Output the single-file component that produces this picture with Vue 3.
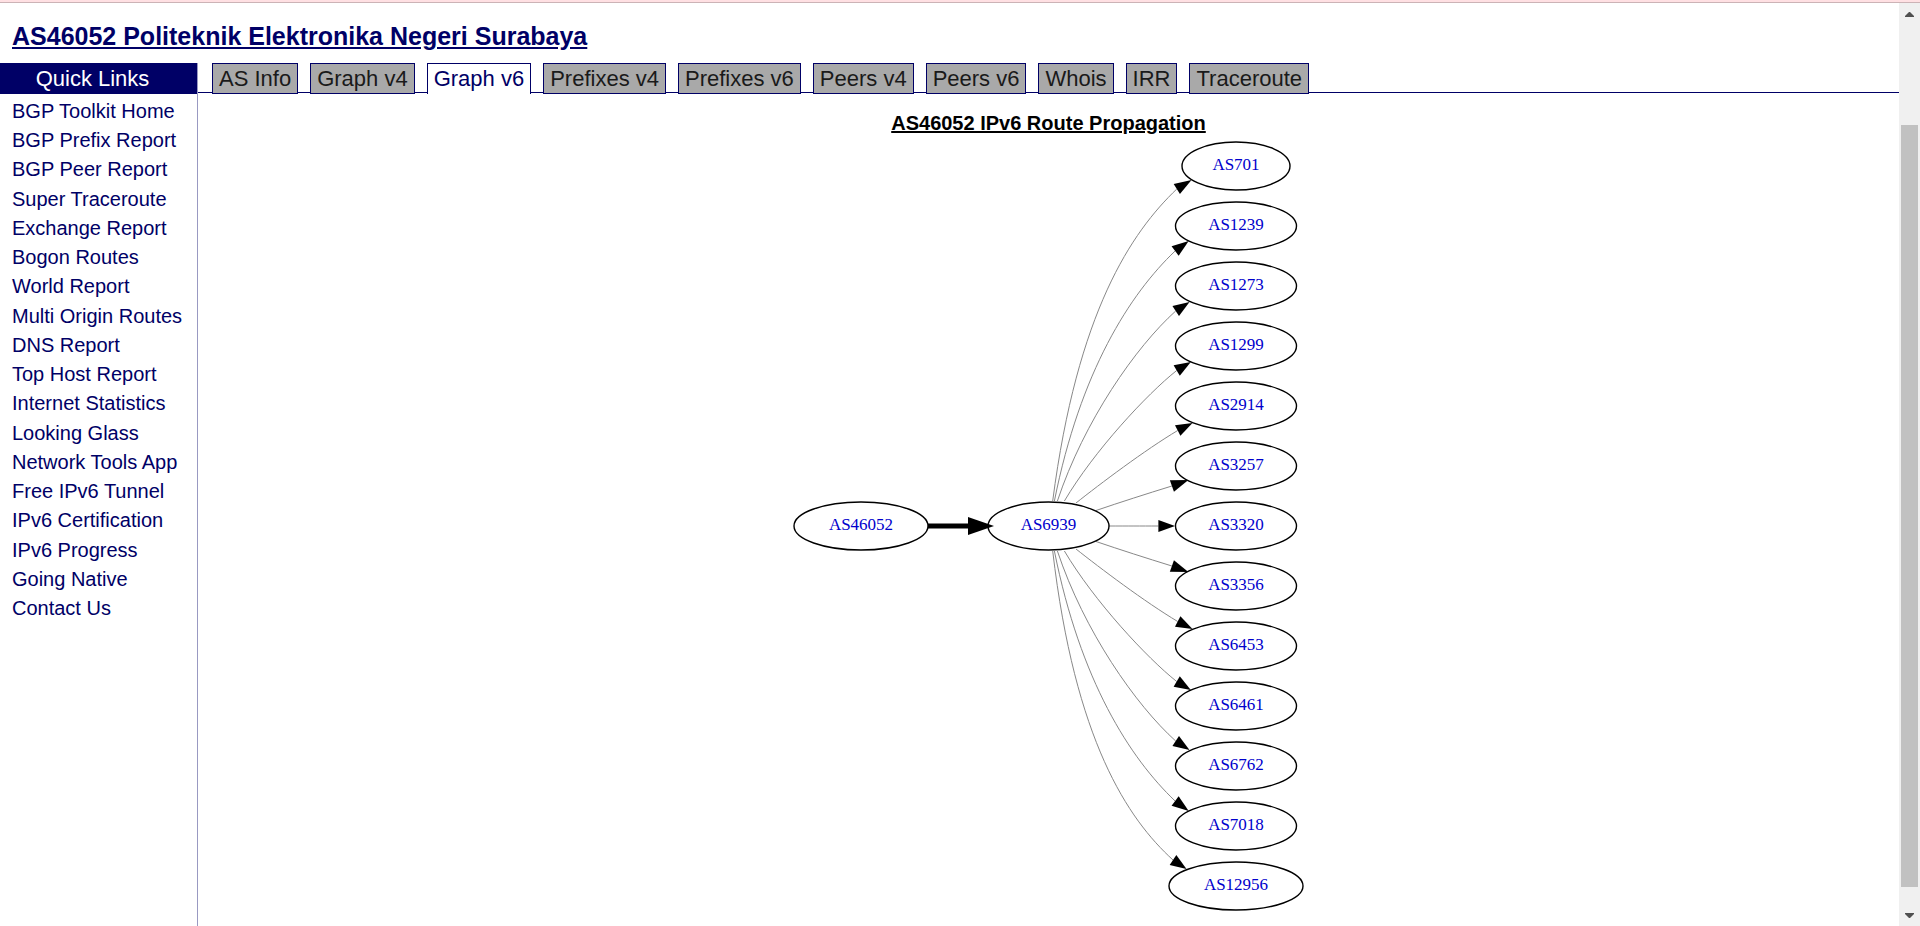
<script setup>
const tabs = [
  'AS Info', 'Graph v4', 'Graph v6', 'Prefixes v4', 'Prefixes v6',
  'Peers v4', 'Peers v6', 'Whois', 'IRR', 'Traceroute',
]
const activeTab = 'Graph v6'

const links = [
  'BGP Toolkit Home', 'BGP Prefix Report', 'BGP Peer Report', 'Super Traceroute',
  'Exchange Report', 'Bogon Routes', 'World Report', 'Multi Origin Routes',
  'DNS Report', 'Top Host Report', 'Internet Statistics', 'Looking Glass',
  'Network Tools App', 'Free IPv6 Tunnel', 'IPv6 Certification', 'IPv6 Progress',
  'Going Native', 'Contact Us',
]

// Graph coordinates: the middle row, holding the origin network, is y = 0.
const nodes = [
  { name: 'AS46052', x: 73, y: 0, rx: 67 },
  { name: 'AS6939', x: 260.5, y: 0, rx: 60.5 },
  { name: 'AS701', x: 448, y: -360, rx: 54 },
  { name: 'AS1239', x: 448, y: -300, rx: 60.5 },
  { name: 'AS1273', x: 448, y: -240, rx: 60.5 },
  { name: 'AS1299', x: 448, y: -180, rx: 60.5 },
  { name: 'AS2914', x: 448, y: -120, rx: 60.5 },
  { name: 'AS3257', x: 448, y: -60, rx: 60.5 },
  { name: 'AS3320', x: 448, y: 0, rx: 60.5 },
  { name: 'AS3356', x: 448, y: 60, rx: 60.5 },
  { name: 'AS6453', x: 448, y: 120, rx: 60.5 },
  { name: 'AS6461', x: 448, y: 180, rx: 60.5 },
  { name: 'AS6762', x: 448, y: 240, rx: 60.5 },
  { name: 'AS7018', x: 448, y: 300, rx: 60.5 },
  { name: 'AS12956', x: 448, y: 360, rx: 67 },
]

// Each edge: start, two control points, arrow base, arrow tip (y above the middle row).
const curves = {
  steep: [[264.7, 25], [289.4, 215], [343.8, 294], [388.8, 337], [403.5, 346]],
  wide: [[264.7, 25], [287, 215], [340, 293], [385, 334], [398.5, 343]],
  second: [[266.4, 25], [292.4, 155], [342, 232], [387.1, 275], [400.7, 285]],
  third: [[269.4, 25], [296, 105], [347.7, 179], [387.7, 215], [401.5, 224]],
  fourth: [[276.4, 25], [306, 75], [359, 132], [388.7, 155.5], [402.8, 164]],
  fifth: [[288, 23], [312, 42], [357, 76], [389.7, 95.5], [404.5, 103]],
  sixth: [[308, 15.5], [333, 24], [358, 32], [383.9, 40], [400.4, 46]],
  level: [[321, 0], [340, 0], [352, 0], [370.4, 0], [387, 0]],
}

function edge(name, side) {
  const [s, a, b, base, tip] = curves[name].map(([x, y]) => [x, y * side])
  const dx = tip[0] - base[0]
  const dy = tip[1] - base[1]
  const len = Math.hypot(dx, dy)
  const nx = (-dy / len) * 6
  const ny = (dx / len) * 6
  return {
    line: `M${s} C${a} ${b} ${base}`,
    arrow: `${base[0] + nx},${base[1] + ny} ${tip} ${base[0] - nx},${base[1] - ny}`,
  }
}

const edges = [
  edge('steep', -1), edge('second', -1), edge('third', -1), edge('fourth', -1),
  edge('fifth', -1), edge('sixth', -1), edge('level', 1), edge('sixth', 1),
  edge('fifth', 1), edge('fourth', 1), edge('third', 1), edge('second', 1),
  edge('wide', 1),
]
</script>

<template>
  <div class="page">
    <div class="notice"></div>
    <div class="view">
      <div class="content">
        <h1><a href="#">AS46052 Politeknik Elektronika Negeri Surabaya</a></h1>
        <div class="columns">
          <aside class="sidebar">
            <div class="sidebar-title">Quick Links</div>
            <ul>
              <li v-for="link in links" :key="link"><a href="#">{{ link }}</a></li>
            </ul>
          </aside>
          <main>
            <nav class="tabs">
              <a
                v-for="tab in tabs"
                :key="tab"
                href="#"
                class="tab"
                :class="{ active: tab === activeTab }"
              >{{ tab }}</a>
            </nav>
            <h2>AS46052 IPv6 Route Propagation</h2>
            <svg class="graph" viewBox="0 -390 521 780" width="521" height="780" role="img" aria-label="Route graph">
              <g v-for="(e, i) in edges" :key="i">
                <path class="line" :d="e.line" />
                <polygon :points="e.arrow" />
              </g>
              <a v-for="n in nodes" :key="n.name" href="#">
                <ellipse :cx="n.x" :cy="n.y" :rx="n.rx" ry="24" />
                <text :x="n.x" :y="n.y + 4">{{ n.name }}</text>
              </a>
              <path class="trunk" d="M140 0H182" />
              <polygon points="180,-9 206,0 180,9" />
            </svg>
          </main>
        </div>
      </div>
      <div class="scrollbar">
        <svg width="9" height="5" viewBox="0 0 9 5"><path d="M0 5V4L4 0H5L9 4V5Z" /></svg>
        <div class="thumb"></div>
        <svg width="9" height="5" viewBox="0 0 9 5"><path d="M0 0V1L4 5H5L9 1V0Z" /></svg>
      </div>
    </div>
  </div>
</template>

<style>
body {
  margin: 0;
  background: #fff;
}
</style>

<style scoped>
.page {
  display: flex;
  flex-direction: column;
  min-height: 100vh;
  font-family: "Liberation Sans", Arial, sans-serif;
  color: #000;
}
.notice {
  height: 2px;
  background: #ffe0e3;
  border-bottom: 1px solid #ccb3b6;
}
.view {
  flex: 1;
  display: flex;
}
.content {
  flex: 1;
  min-width: 0;
  display: flex;
  flex-direction: column;
}
a {
  color: #000066;
  text-decoration: none;
}
h1 {
  margin: 0;
  padding: 17px 12px 11px;
  font-size: 25px;
  line-height: 32px;
}
h1 a {
  text-decoration: underline;
}
.columns {
  flex: 1;
  display: flex;
}
.sidebar {
  width: 197px;
  flex: none;
  border-right: 1px solid #9999c2;
}
.sidebar-title {
  padding-right: 12px;
  background: #000066;
  color: #fff;
  font-size: 22px;
  line-height: 31px;
  text-align: center;
}
ul {
  display: grid;
  align-content: space-between;
  min-height: 526px;
  margin: 0;
  padding: 3px 0 0 12px;
  list-style: none;
  font-size: 20px;
  line-height: 29px;
}
main {
  flex: 1;
  min-width: 0;
}
.tabs {
  display: flex;
  gap: 12px;
  height: 29px;
  padding-left: 14px;
  border-bottom: 1px solid #000066;
}
.tab {
  height: 29px;
  padding: 0 6px;
  border: 1px solid #000066;
  background: #a9a9a9;
  color: #1a1a1a;
  font-size: 22px;
  line-height: 29px;
  white-space: nowrap;
}
.tab.active {
  height: 30px;
  border-bottom: 0;
  background: #fff;
  color: #000066;
}
h2 {
  margin: 0;
  padding-top: 17px;
  font-size: 20px;
  line-height: 26px;
  text-align: center;
  text-decoration: underline;
}
.graph {
  display: block;
  margin: 0 auto;
}
.graph ellipse {
  fill: none;
  stroke: #000;
  stroke-width: 1.4;
}
.graph text {
  fill: #0000cc;
  font-family: "Liberation Serif", "Times New Roman", serif;
  font-size: 17px;
  text-anchor: middle;
}
.line {
  fill: none;
  stroke: #888;
  stroke-width: 1;
}
.trunk {
  stroke: #000;
  stroke-width: 5;
}
.scrollbar {
  width: 21px;
  display: flex;
  flex-direction: column;
  align-items: center;
  justify-content: space-between;
  box-sizing: border-box;
  padding: 9px 2px 8px;
  background: #f0f0f0;
}
.scrollbar svg {
  display: block;
  fill: #505050;
}
.thumb {
  flex: 1;
  align-self: stretch;
  margin: 108px 0 26px;
  background: #c1c1c1;
}
</style>
